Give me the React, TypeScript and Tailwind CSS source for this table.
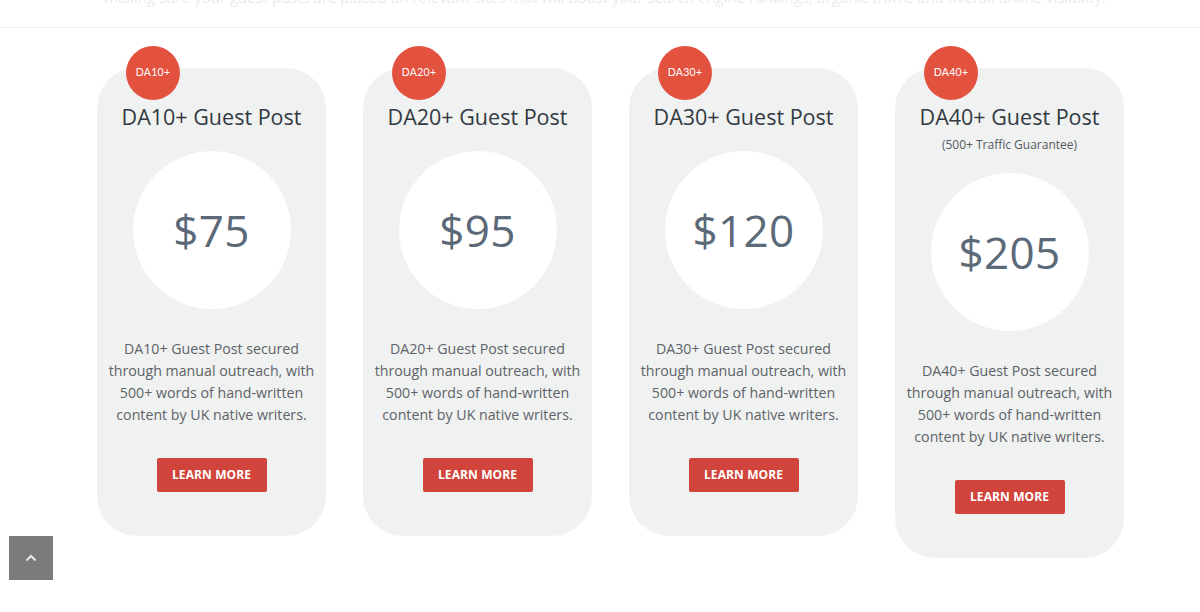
import React from "react";

type Plan = { da: string; price: string; sub?: string };

const plans: Plan[] = [
  { da: "DA10+", price: "$75" },
  { da: "DA20+", price: "$95" },
  { da: "DA30+", price: "$120" },
  { da: "DA40+", price: "$205", sub: "(500+ Traffic Guarantee)" },
];

function Card({ p }: { p: Plan }) {
  return (
    <div className="relative w-[229px] shrink-0 rounded-[40px] bg-[#f0f1f1] pt-[34px] pb-[44px] flex flex-col items-center">
      <div className="absolute left-[29px] top-[-22px] w-[54px] h-[54px] rounded-full bg-[#e2523f] flex items-center justify-center text-white text-[10.5px] [font-family:Lato,'Noto_Sans',sans-serif] tracking-[0.3px]">
        {p.da}
      </div>
      <h3 className="text-[21.5px] leading-[30px] text-[#333a42] font-normal">{p.da} Guest Post</h3>
      {p.sub && <div className="mt-[4px] text-[12px] leading-[18px] text-[#555b60]">{p.sub}</div>}
      <div className={`${p.sub ? "mt-[19px]" : "mt-[19px]"} w-[158px] h-[158px] rounded-full bg-white flex items-center justify-center`}>
        <span className="text-[44px] leading-none text-[#5b6978] tracking-[0.3px]">{p.price}</span>
      </div>
      <p className="mt-[29px] text-center text-[14.2px] leading-[22px] text-[#5d6368] px-2">
        {p.da} Guest Post secured
        <br />
        through manual outreach, with
        <br />
        500+ words of hand-written
        <br />
        content by UK native writers.
      </p>
      <button className="mt-[32px] w-[110px] h-[34px] rounded-[2px] bg-[#d0443b] text-white text-[12px] font-bold tracking-[0.1px]">
        LEARN MORE
      </button>
    </div>
  );
}

export default function App() {
  return (
    <div className="w-[1200px] h-[612px] bg-white overflow-hidden relative [font-family:'Open_Sans',sans-serif]">
      <div className="h-[28px] border-b border-[#f0f0f0] overflow-hidden">
        <p className="-mt-[12px] pl-[104px] text-[15px] leading-[18px] text-[#ececec] whitespace-nowrap">
          making sure your guest posts are placed on relevant sites that will boost your search engine rankings, organic traffic and overall online visibility.
        </p>
      </div>
      <div className="flex items-start gap-[37px] pl-[97px] pt-[40px]">
        {plans.map((p) => (
          <Card key={p.da} p={p} />
        ))}
      </div>
      <div className="absolute left-[9px] top-[536px] w-[44px] h-[44px] bg-[#7b7b7e] flex items-center justify-center">
        <svg width="12" height="8" viewBox="0 0 12 8" fill="none">
          <path d="M1.5 6.5 L6 2 L10.5 6.5" stroke="#e8e8e8" strokeWidth="2" />
        </svg>
      </div>
    </div>
  );
}
